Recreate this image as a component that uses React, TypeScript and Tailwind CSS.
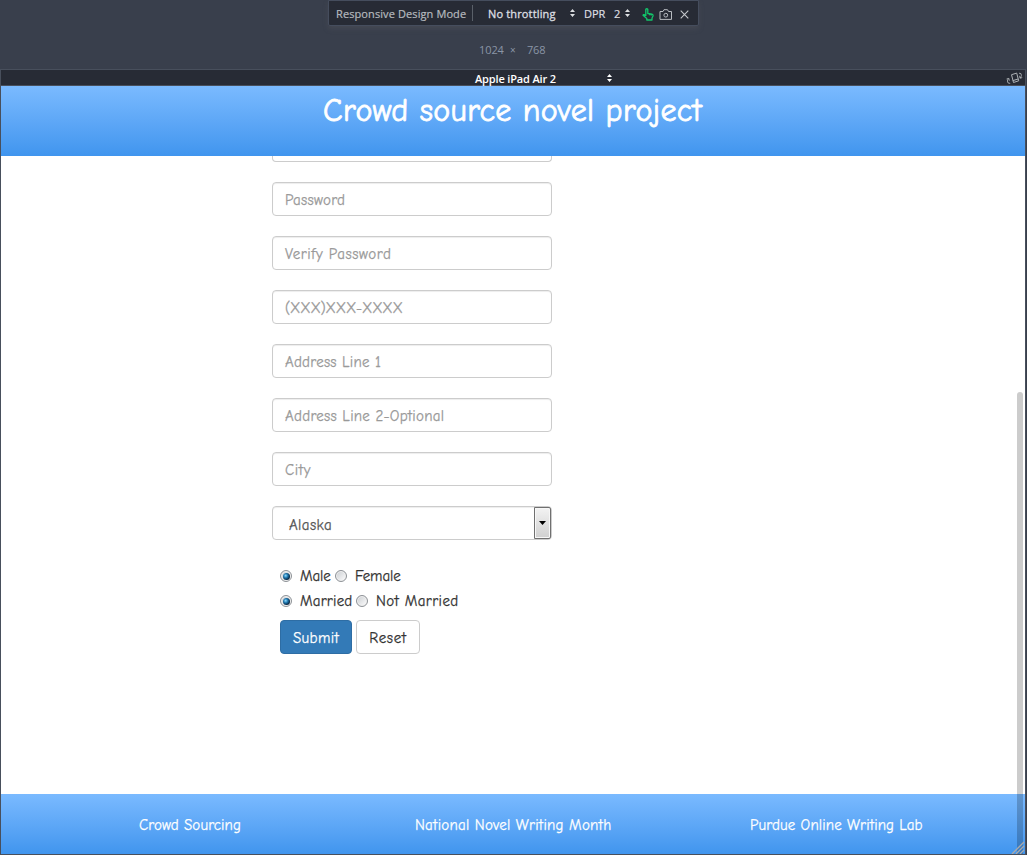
import type { ReactNode } from 'react';

const fields = [
  { label: 'Password', spacing: 'tracking-[0.25px]' },
  { label: 'Verify Password', spacing: 'tracking-[0.56px]' },
  { label: '(XXX)XXX-XXXX', spacing: 'tracking-[-0.12px]' },
  { label: 'Address Line 1', spacing: 'tracking-[0.22px]' },
  { label: 'Address Line 2-Optional', spacing: 'tracking-[0.26px]' },
  { label: 'City', spacing: 'tracking-[0.6px]' },
];

function Sorter({ className = '' }: { className?: string }) {
  return (
    <svg width="5" height="8" viewBox="0 0 5 8" className={`shrink-0 ${className}`} fill="currentColor">
      <path d="M2.5 0L5 3H0zM2.5 8L0 5h5z" />
    </svg>
  );
}

function Toolbar() {
  return (
    <div className="mx-auto flex h-[26px] w-[371px] shrink-0 items-center rounded-b-[2px] border border-[#454d5d] bg-[#272b35] pb-px pl-[7px] text-[11px] text-[#dddfe2] shadow-[0_3px_5px_rgba(90,90,95,0.35)]">
      <span className="w-[136px] whitespace-nowrap pt-[3px] tracking-[0.1px] text-[#b6babf] [-webkit-text-stroke:0.2px]">Responsive Design Mode</span>
      <span className="h-4 w-px bg-[#5a6069]" />
      <span className="ml-[15px] w-[82px] whitespace-nowrap pt-[3px] tracking-[0.15px] [-webkit-text-stroke:0.3px]">No throttling</span>
      <Sorter />
      <span className="ml-[9px] w-[30px] pt-[3px] [-webkit-text-stroke:0.2px]">DPR</span>
      <span className="w-[11px] pt-[3px] [-webkit-text-stroke:0.2px]">2</span>
      <Sorter />
      <svg width="12" height="13" viewBox="0 0 12 13" className="ml-3 mt-[4px]" fill="none" stroke="#12c66b" strokeWidth="1.3" strokeLinejoin="round">
        <path d="M3.8 8V1.3Q4.8 .2 5.8 1.3V5.5L10 6.2Q11.3 6.5 11 8L10 10V12H4.8V10.5L1 7.3Q1.3 6.2 2.3 6.7L3.8 7.8M7.6 5.8v1.5M9.3 6v1.5" />
      </svg>
      <svg width="13" height="11" viewBox="0 0 13 11" className="ml-[5px] mt-[4px]" fill="none" stroke="#b8bcc1">
        <path d="M1 2.5h3L5 .7h3.5l1 1.8h3v7.9H1z" />
        <circle cx="6.8" cy="6.2" r="1.9" />
      </svg>
      <svg width="9" height="9" viewBox="0 0 9 9" className="ml-[8px] mt-[4px]" fill="none" stroke="#c5c8cc" strokeWidth="1.1">
        <path d="M.7.7l7.6 7.6M8.3.7L.7 8.3" />
      </svg>
    </div>
  );
}

function Radio({ checked = false }: { checked?: boolean }) {
  return (
    <span className="flex size-3 shrink-0 items-center justify-center rounded-full border border-[#8d9196] bg-gradient-to-br from-[#c9ccd0] to-[#ffffff] shadow-[inset_0_0_0_1px_#f0f0f0]">
      {checked && (
        <span className="size-[7px] rounded-full bg-[radial-gradient(circle_at_38%_38%,#8edcff_0%,#1e75ac_35%,#07243f_70%)]" />
      )}
    </span>
  );
}

function Choice({ children, className, checked }: { children: ReactNode; className: string; checked?: boolean }) {
  return (
    <label className={`flex items-center gap-2 whitespace-nowrap ${className}`}>
      <Radio checked={checked} />
      <span>{children}</span>
    </label>
  );
}

export default function App() {
  return (
    <div className="flex h-[855px] w-[1027px] flex-col overflow-hidden bg-[#393f4c] font-['Open_Sans',sans-serif]">
      <Toolbar />
      <div className="flex h-[43px] shrink-0 items-center pl-[479px] pt-[5px] text-[11px] text-[#8a95a6]">
        <span className="w-[31px] tracking-[-0.1px]">1024</span>
        <span className="w-[17px] pt-px text-[10px]">×</span>
        <span className="tracking-[-0.2px]">768</span>
      </div>
      <div className="relative flex h-[786px] w-[1026px] flex-col border border-[#484f5c]">
        <div className="flex h-4 shrink-0 items-center border-b border-[#484f5c] bg-[#272b35] pl-[474px] text-[11px] font-semibold text-white">
          <span className="w-[132px] whitespace-nowrap pt-[3px] tracking-[-0.15px]">Apple iPad Air 2</span>
          <Sorter />
          <svg width="17" height="14" viewBox="0 0 17 14" className="ml-auto mr-[2px] mt-px" fill="none" stroke="#aeb2b6">
            <path d="M5.5 3.7l5.2-1.6 2 7.7-5.2 1.7zM6.9 9.6l5.2-1.6" />
            <path d="M13 2.2q2.6-.3 2.4 2.2-.1 1.4-1.3 2.7M13.6 4.8l.4 2.4 2.2-.6M4.2 12.4Q1.3 12.7 1.4 10q.1-1.3 1.3-2.5M.6 8l2.2-.6.5 2.3" strokeWidth=".9" />
          </svg>
        </div>
        <div className="flex min-h-0 flex-1 flex-col bg-white font-['Comic_Sans_MS','Comic_Neue',Lato,sans-serif] text-[15px] [-webkit-text-stroke:0.25px]">
          <header className="flex h-[70px] shrink-0 justify-center bg-gradient-to-b from-[#7abaff] to-[#4095ee] pt-[3px]">
            <h1 className="whitespace-nowrap pr-px text-[32px] leading-[44px] tracking-[0.36px] text-white [-webkit-text-stroke:0.8px]">Crowd source novel project</h1>
          </header>
          <main className="flex min-h-0 flex-1 flex-col pl-[271px] text-[#333]">
            <div className="h-1.5 w-[280px] shrink-0 rounded-b-[4px] border border-t-0 border-[#ccc]" />
            <div className="mt-5 flex flex-col gap-5">
              {fields.map(({ label, spacing }) => (
                <div
                  key={label}
                  className={`flex h-[34px] w-[280px] items-center rounded-[4px] border border-[#ccc] pl-3 pt-[2px] text-[#999] shadow-[inset_0_1px_1px_rgba(0,0,0,0.075)] ${spacing}`}
                >
                  {label}
                </div>
              ))}
              <div className="flex h-[34px] w-[280px] items-center justify-between rounded-[4px] border border-[#ccc] pl-4 text-[#555] shadow-[inset_0_1px_1px_rgba(0,0,0,0.075)]">
                <span className="pt-[4px] tracking-[0.4px]">Alaska</span>
                <span className="flex h-8 w-[17px] items-center justify-center rounded-r-[2px] border border-[#707070] bg-gradient-to-b from-[#f3f3f3] to-[#d0d0d0] shadow-[inset_0_0_0_1px_#f7f7f7]">
                  <svg width="7" height="4" viewBox="0 0 7 4"><path d="M0 0h7L3.5 4z" /></svg>
                </span>
              </div>
            </div>
            <div className="ml-2 mt-[26px] flex h-5 items-center">
              <Choice checked className="w-[55px] tracking-[-0.1px]">Male</Choice>
              <Choice className="tracking-[-0.1px]">Female</Choice>
            </div>
            <div className="ml-2 mt-[5px] flex h-5 items-center">
              <Choice checked className="w-[76px] tracking-[0.2px]">Married</Choice>
              <Choice className="tracking-[0.42px]">Not Married</Choice>
            </div>
            <div className="ml-2 mt-[9px] flex gap-1">
              <button className="h-[34px] w-[72px] rounded-[4px] border border-[#2e6da4] bg-[#337ab7] pt-[2px] tracking-[0.35px] text-white">Submit</button>
              <button className="h-[34px] w-16 rounded-[4px] border border-[#ccc] bg-white pt-[2px] tracking-[0.6px]">Reset</button>
            </div>
          </main>
          <footer className="flex h-[60px] shrink-0 items-center bg-gradient-to-b from-[#7abaff] to-[#4095ee] pt-[2px] text-white">
            <a className="ml-[138px] w-[276px] whitespace-nowrap tracking-[0.1px]">Crowd Sourcing</a>
            <a className="w-[335px] whitespace-nowrap tracking-[0.25px]">National Novel Writing Month</a>
            <a className="whitespace-nowrap tracking-[0.13px]">Purdue Online Writing Lab</a>
          </footer>
        </div>
        <div className="absolute bottom-0 right-[2px] h-[462px] w-1.5 rounded-t-[3px] bg-black/20" />
        <svg width="14" height="13" viewBox="0 0 14 13" className="absolute bottom-0 right-0" stroke="#aaa" strokeWidth="1.3">
          <path d="M1 13L13 1M5 13l8-8M9 13l4-4" />
        </svg>
      </div>
    </div>
  );
}
